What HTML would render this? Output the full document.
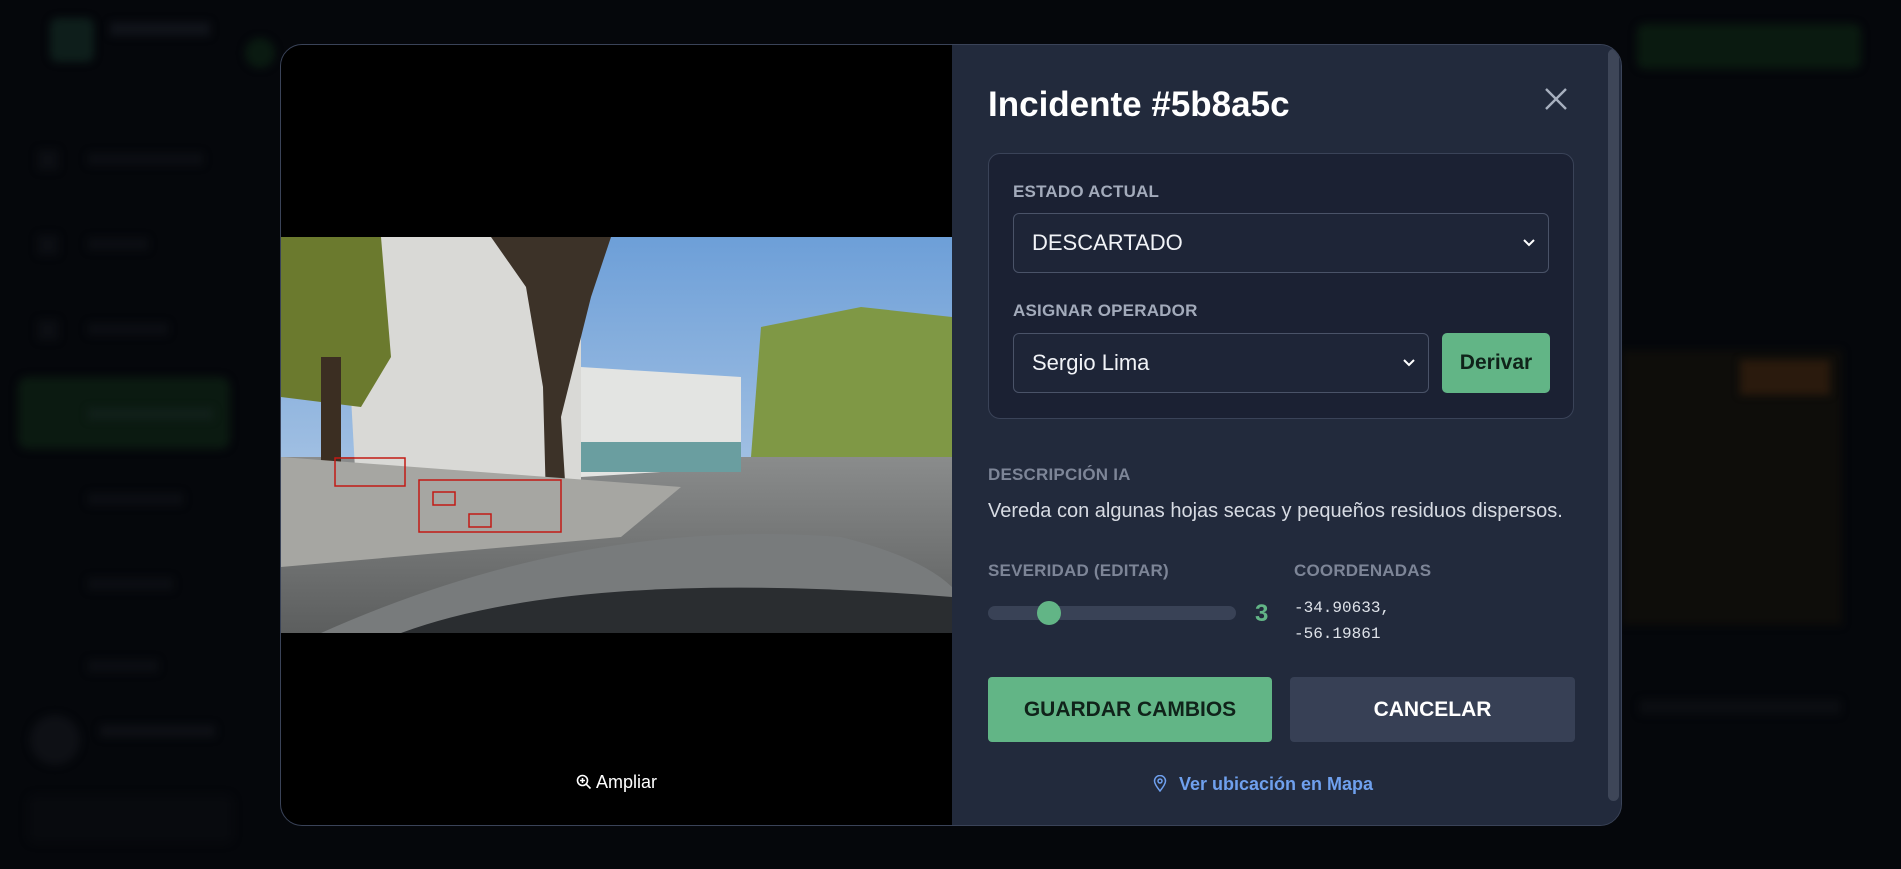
<!DOCTYPE html>
<html><head><meta charset="utf-8"><style>
*{box-sizing:border-box;margin:0;padding:0}
body{width:1901px;height:869px;background:#05070b;font-family:"Liberation Sans",sans-serif;position:relative;overflow:hidden}
.bg{position:absolute;filter:blur(4px)}
.modal{position:absolute;left:280px;top:44px;width:1342px;height:782px;border-radius:22px;overflow:hidden;border:1px solid #3a4358;background:#222a3c}
.left{position:absolute;left:0;top:0;width:671px;height:100%;background:#000}
.right{position:absolute;left:671px;top:0;right:0;height:100%;background:#222a3c}
.lbl{position:absolute;font-size:17px;font-weight:bold;color:#a3abbb;letter-spacing:.2px}
.sel{position:absolute;background:#1e2537;border:1px solid #4a5368;border-radius:6px;color:#f1f3f7;font-size:22px;padding-left:18px;display:flex;align-items:center}
.sel svg{position:absolute;right:12px;top:50%;margin-top:-5px}
</style></head><body>
<div class="bg" style="left:50px;top:18px;width:44px;height:44px;border-radius:8px;background:#0e1e1b"></div>
<div class="bg" style="left:110px;top:22px;width:100px;height:14px;background:#101319"></div>
<div class="bg" style="left:245px;top:38px;width:30px;height:30px;border-radius:50%;background:#0a1a11"></div>
<div class="bg" style="left:18px;top:377px;width:212px;height:72px;border-radius:10px;background:#0b1a11"></div>
<div class="bg" style="left:38px;top:150px;width:20px;height:20px;background:#0c0e13"></div>
<div class="bg" style="left:88px;top:153px;width:115px;height:12px;background:#0c0e13"></div>
<div class="bg" style="left:38px;top:235px;width:20px;height:20px;background:#0c0e13"></div>
<div class="bg" style="left:88px;top:238px;width:60px;height:12px;background:#0c0e13"></div>
<div class="bg" style="left:38px;top:320px;width:20px;height:20px;background:#0c0e13"></div>
<div class="bg" style="left:88px;top:323px;width:80px;height:12px;background:#0c0e13"></div>
<div class="bg" style="left:88px;top:408px;width:125px;height:12px;background:#11201a"></div>
<div class="bg" style="left:88px;top:493px;width:95px;height:12px;background:#0c0e13"></div>
<div class="bg" style="left:88px;top:578px;width:85px;height:12px;background:#0c0e13"></div>
<div class="bg" style="left:88px;top:660px;width:70px;height:12px;background:#0c0e13"></div>
<div class="bg" style="left:30px;top:715px;width:50px;height:50px;border-radius:50%;background:#0e1015"></div>
<div class="bg" style="left:100px;top:725px;width:115px;height:12px;background:#0e1015"></div>
<div class="bg" style="left:28px;top:795px;width:205px;height:48px;border-radius:8px;background:#080a0e"></div>
<div class="bg" style="left:1637px;top:24px;width:224px;height:45px;border-radius:8px;background:#0a1a10"></div>
<div class="bg" style="left:1622px;top:350px;width:220px;height:275px;background:#0e0d0a"></div>
<div class="bg" style="left:1740px;top:360px;width:90px;height:35px;background:#2a1a0d"></div>
<div class="bg" style="left:1640px;top:700px;width:200px;height:14px;background:#0c0e12"></div>

<div class="modal">
 <div class="left">
  <svg style="position:absolute;left:0;top:192px" width="671" height="396" viewBox="0 0 671 396">
   <defs><linearGradient id="sky" x1="0" y1="0" x2="0" y2="1"><stop offset="0" stop-color="#6d9fd8"/><stop offset="1" stop-color="#c8d8ea"/></linearGradient>
   <linearGradient id="rd" x1="0" y1="0" x2="0" y2="1"><stop offset="0" stop-color="#8a8c8c"/><stop offset="1" stop-color="#5c5e5e"/></linearGradient></defs>
   <rect width="671" height="396" fill="url(#sky)"/>
   <rect x="0" y="220" width="671" height="176" fill="url(#rd)"/>
   <path d="M95 0 L260 0 L300 50 L300 250 L75 250 L70 160Z" fill="#d9d9d6"/>
   <path d="M300 130 L460 140 L460 230 L300 240Z" fill="#e3e4e2"/>
   <rect x="300" y="205" width="160" height="30" fill="#6a9ea0"/>
   <path d="M0 0 L100 0 L110 120 L80 170 L0 160Z" fill="#6b7a2e"/>
   <path d="M480 90 L580 70 L671 80 L671 220 L470 220Z" fill="#7f9845"/>
   <path d="M210 0 L330 0 L310 60 L280 180 L285 260 L265 265 L262 150 L245 50Z" fill="#3c3228"/>
   <rect x="40" y="120" width="20" height="130" fill="#3b2e22"/>
   <path d="M0 220 L400 250 L340 300 L0 330Z" fill="#a6a6a2"/>
   <path d="M40 396 Q300 280 560 300 Q640 320 671 350 L671 396Z" fill="#787b7c"/>
   <path d="M120 396 Q300 330 671 360 L671 396Z" fill="#2a2d30"/>
   <rect x="54" y="221" width="70" height="28" fill="none" stroke="#c21a14" stroke-width="1.5"/>
   <rect x="138" y="243" width="142" height="52" fill="none" stroke="#c21a14" stroke-width="1.5"/>
   <rect x="152" y="255" width="22" height="13" fill="none" stroke="#c21a14" stroke-width="1.5"/>
   <rect x="188" y="277" width="22" height="13" fill="none" stroke="#c21a14" stroke-width="1.5"/>
  </svg>
  <div style="position:absolute;left:0;width:671px;top:727px;text-align:center;color:#fff;font-size:18px">
   <svg width="16" height="16" viewBox="0 0 16 16" style="vertical-align:-2px;margin-right:4px"><circle cx="6.5" cy="6.5" r="5" fill="none" stroke="#fff" stroke-width="1.6"/><path d="M10.2 10.2L14.5 14.5M6.5 4v5M4 6.5h5" stroke="#fff" stroke-width="1.6"/></svg>Ampliar</div>
 </div>
 <div class="right">
  <div style="position:absolute;left:36px;top:40px;font-size:35px;font-weight:bold;color:#fff">Incidente #5b8a5c</div>
  <svg style="position:absolute;left:592px;top:42px" width="24" height="24" viewBox="0 0 24 24"><path d="M2 2L22 22M22 2L2 22" stroke="#a8b0bf" stroke-width="2.4"/></svg>
  <div style="position:absolute;left:36px;top:108px;width:586px;height:266px;background:#1b2133;border:1px solid #3a4358;border-radius:12px"></div>
  <div class="lbl" style="left:61px;top:137px">ESTADO ACTUAL</div>
  <div class="sel" style="left:61px;top:168px;width:536px;height:60px">DESCARTADO<svg width="14" height="9" viewBox="0 0 14 9"><path d="M2 2L7 7L12 2" fill="none" stroke="#fff" stroke-width="2"/></svg></div>
  <div class="lbl" style="left:61px;top:256px">ASIGNAR OPERADOR</div>
  <div class="sel" style="left:61px;top:288px;width:416px;height:60px">Sergio Lima<svg width="14" height="9" viewBox="0 0 14 9"><path d="M2 2L7 7L12 2" fill="none" stroke="#fff" stroke-width="2"/></svg></div>
  <div style="position:absolute;left:490px;top:288px;width:108px;height:60px;background:#62b586;border-radius:5px;color:#10231a;font-weight:bold;font-size:21px;display:flex;align-items:center;justify-content:center">Derivar</div>
  <div class="lbl" style="left:36px;top:420px;color:#7d8597">DESCRIPCIÓN IA</div>
  <div style="position:absolute;left:36px;top:455px;font-size:20px;color:#d7dbe3">Vereda con algunas hojas secas y pequeños residuos dispersos.</div>
  <div class="lbl" style="left:36px;top:516px;color:#7d8597">SEVERIDAD (EDITAR)</div>
  <div style="position:absolute;left:36px;top:561px;width:248px;height:14px;background:#394256;border-radius:7px"></div>
  <div style="position:absolute;left:85px;top:556px;width:24px;height:24px;background:#62b586;border-radius:50%"></div>
  <div style="position:absolute;left:303px;top:555px;font-size:24px;font-weight:bold;color:#62b586">3</div>
  <div class="lbl" style="left:342px;top:516px;color:#7d8597">COORDENADAS</div>
  <div style="position:absolute;left:342px;top:550px;font-family:'Liberation Mono',monospace;font-size:16px;line-height:26px;color:#dfe3ea">-34.90633,<br>-56.19861</div>
  <div style="position:absolute;left:36px;top:632px;width:284px;height:65px;background:#62b586;border-radius:4px;color:#10231a;font-weight:bold;font-size:21px;display:flex;align-items:center;justify-content:center">GUARDAR CAMBIOS</div>
  <div style="position:absolute;left:338px;top:632px;width:285px;height:65px;background:#374055;border-radius:4px;color:#fff;font-weight:bold;font-size:21px;display:flex;align-items:center;justify-content:center">CANCELAR</div>
  <div style="position:absolute;left:0;width:622px;top:729px;text-align:center;color:#6fa0ee;font-size:18px;font-weight:bold">
   <svg width="14" height="17" viewBox="0 0 14 17" style="vertical-align:-2px;margin-right:12px"><path d="M7 16C3 11 1.5 8.5 1.5 6a5.5 5.5 0 0 1 11 0C12.5 8.5 11 11 7 16Z" fill="none" stroke="#6fa0ee" stroke-width="1.5"/><circle cx="7" cy="6" r="2" fill="none" stroke="#6fa0ee" stroke-width="1.5"/></svg>Ver ubicación en Mapa</div>
  <div style="position:absolute;right:2px;top:4px;width:11px;height:752px;background:#3e4658;border-radius:6px"></div>
 </div>
</div>
</body></html>
